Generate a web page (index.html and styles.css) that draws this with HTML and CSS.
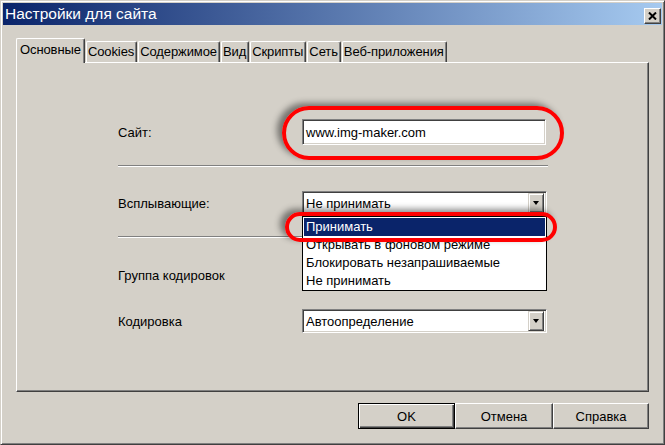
FILE: index.html
```html
<!DOCTYPE html>
<html lang="ru">

<head>
	<meta charset="utf-8" />
	<title>Настройки для сайта</title>
	<link rel="stylesheet" href="styles.css">
</head>

<body>
	<div class="window">
		<div class="titlebar">
			<span class="title">Настройки для сайта</span>
			<span class="close">
				<svg width="9" height="8" viewBox="0 0 9 8"><path d="M1 0.5 L8 7.5 M8 0.5 L1 7.5" stroke="#000" stroke-width="2" /></svg>
			</span>
		</div>

		<div class="body">
			<div class="tabs">
				<span class="tab active">Основные</span>
				<span class="tab">Cookies</span>
				<span class="tab">Содержимое</span>
				<span class="tab">Вид</span>
				<span class="tab">Скрипты</span>
				<span class="tab">Сеть</span>
				<span class="tab">Веб-приложения</span>
			</div>

			<div class="panel">
				<div class="row row-site">
					<span class="label">Сайт:</span>
					<span class="input">www.img-maker.com</span>
				</div>

				<hr class="sep">

				<div class="row">
					<span class="label">Всплывающие:</span>
					<span class="select">Не принимать<span class="arrow"></span></span>
				</div>

				<hr class="sep sep-low">

				<div class="row">
					<span class="label">Группа кодировок</span>
				</div>

				<div class="row row-enc">
					<span class="label">Кодировка</span>
					<span class="select">Автоопределение<span class="arrow"></span></span>
				</div>

				<ul class="dropdown">
					<li class="selected">Принимать</li>
					<li>Открывать в фоновом режиме</li>
					<li>Блокировать незапрашиваемые</li>
					<li>Не принимать</li>
				</ul>

				<span class="oval oval-site"></span>
				<span class="oval oval-popup"></span>
			</div>

			<div class="buttons">
				<button class="btn default">OK</button>
				<button class="btn">Отмена</button>
				<button class="btn narrow">Справка</button>
			</div>
		</div>
	</div>
</body>

</html>
```

FILE: styles.css
```css
body {
	margin: 0;
	font-family: "Liberation Sans", Arial, sans-serif;
	font-size: 13px;
	color: #000;
}

.window {
	width: 665px;
	height: 445px;
	box-sizing: border-box;
	background: #d4d0c8;
	border: 1px solid;
	border-color: #d4d0c8 #404040 #404040 #d4d0c8;
	box-shadow: inset 1px 1px #fff, inset -1px -1px #808080;
	padding: 2px;
}

/* title bar */
.titlebar {
	height: 22px;
	display: flex;
	align-items: center;
	justify-content: space-between;
	padding: 0 1px 0 2px;
	background: linear-gradient(90deg, #0a246a, #a6caf0);
	color: #fff;
}

.title {
	font-size: 15.5px;
}

.close {
	width: 17px;
	height: 16px;
	margin-top: 4px;
	box-sizing: border-box;
	display: flex;
	align-items: center;
	justify-content: center;
	background: #d4d0c8;
	border: 1px solid;
	border-color: #fff #404040 #404040 #fff;
	box-shadow: inset -1px -1px #808080;
}

/* tabs */
.body {
	padding: 13px 13px 0;
}

.tabs {
	display: flex;
	align-items: flex-end;
	height: 24px;
	position: relative;
	z-index: 1;
}

.tab {
	height: 21px;
	box-sizing: border-box;
	line-height: 19px;
	padding: 0 2px 0 1px;
	border-top: 1px solid #fff;
	border-left: 1px solid #fff;
	border-right: 1px solid #404040;
	border-radius: 2px 2px 0 0;
	box-shadow: inset -1px 0 #808080;
	margin-right: 1px;
	letter-spacing: -0.1px;
}

.tab.active {
	height: 25px;
	line-height: 22px;
	margin-bottom: -1px;
	padding: 0 3px 0 3px;
	background: #d4d0c8;
}

/* panel */
.panel {
	position: relative;
	width: 633px;
	height: 330px;
	box-sizing: border-box;
	border: 1px solid;
	border-color: #fff #404040 #404040 #fff;
	box-shadow: inset -1px -1px #808080;
	padding: 56px 0 0 101px;
}

.row {
	display: flex;
	align-items: center;
	height: 24px;
}

.row-site {
	height: 26px;
}

.row-enc {
	margin-top: 22px;
}

.label {
	width: 184px;
}

.input,
.select {
	box-sizing: border-box;
	display: flex;
	align-items: center;
	background: #fff;
	border: 1px solid;
	border-color: #808080 #fff #fff #808080;
	box-shadow: inset 1px 1px #404040, inset -1px -1px #d4d0c8;
	padding-left: 3px;
}

.input {
	width: 244px;
	height: 26px;
}

.select {
	width: 245px;
	height: 24px;
	padding-right: 2px;
}

.arrow {
	margin-left: auto;
	width: 16px;
	height: 20px;
	box-sizing: border-box;
	background: #d4d0c8;
	border: 1px solid;
	border-color: #d4d0c8 #404040 #404040 #d4d0c8;
	box-shadow: inset 1px 1px #fff, inset -1px -1px #808080;
	position: relative;
}

.arrow::after {
	content: "";
	position: absolute;
	left: 4px;
	top: 7px;
	border-left: 3.5px solid transparent;
	border-right: 3.5px solid transparent;
	border-top: 4px solid #000;
}

.sep {
	width: 430px;
	height: 0;
	margin: 20px 0 24px;
	border: 0;
	border-top: 1px solid #808080;
	border-bottom: 1px solid #fff;
}

.sep-low {
	margin: 21px 0 25px;
}

/* open dropdown list */
.dropdown {
	position: absolute;
	left: 285px;
	top: 153px;
	width: 245px;
	box-sizing: border-box;
	margin: 0;
	padding: 1px 1px 0;
	list-style: none;
	background: #fff;
	border: 1px solid #000;
}

.dropdown li {
	height: 18px;
	line-height: 18px;
	padding-left: 2px;
}

.dropdown li.selected {
	background: #0a246a;
	color: #fff;
}

/* red highlight marks */
.oval {
	position: absolute;
	box-sizing: border-box;
	border: 4px solid #f00;
	box-shadow: -5px -3px 6px rgba(0, 0, 0, 0.45);
}

.oval-site {
	left: 265px;
	top: 43px;
	width: 282px;
	height: 54px;
	border-radius: 27px;
}

.oval-popup {
	left: 268px;
	top: 149px;
	width: 272px;
	height: 30px;
	border-radius: 15px;
}

/* buttons */
.buttons {
	display: flex;
	justify-content: flex-end;
	margin-top: 11px;
}

.btn {
	width: 98px;
	height: 26px;
	box-sizing: border-box;
	background: #d4d0c8;
	border: 1px solid;
	border-color: #fff #404040 #404040 #fff;
	box-shadow: inset -1px -1px #808080;
	font: inherit;
	padding: 0;
}

.btn.narrow {
	width: 96px;
}

.btn.default {
	width: 97px;
	border-color: #000;
	box-shadow: inset 1px 1px #fff, inset -1px -1px #404040, inset -2px -2px #808080;
}
```
